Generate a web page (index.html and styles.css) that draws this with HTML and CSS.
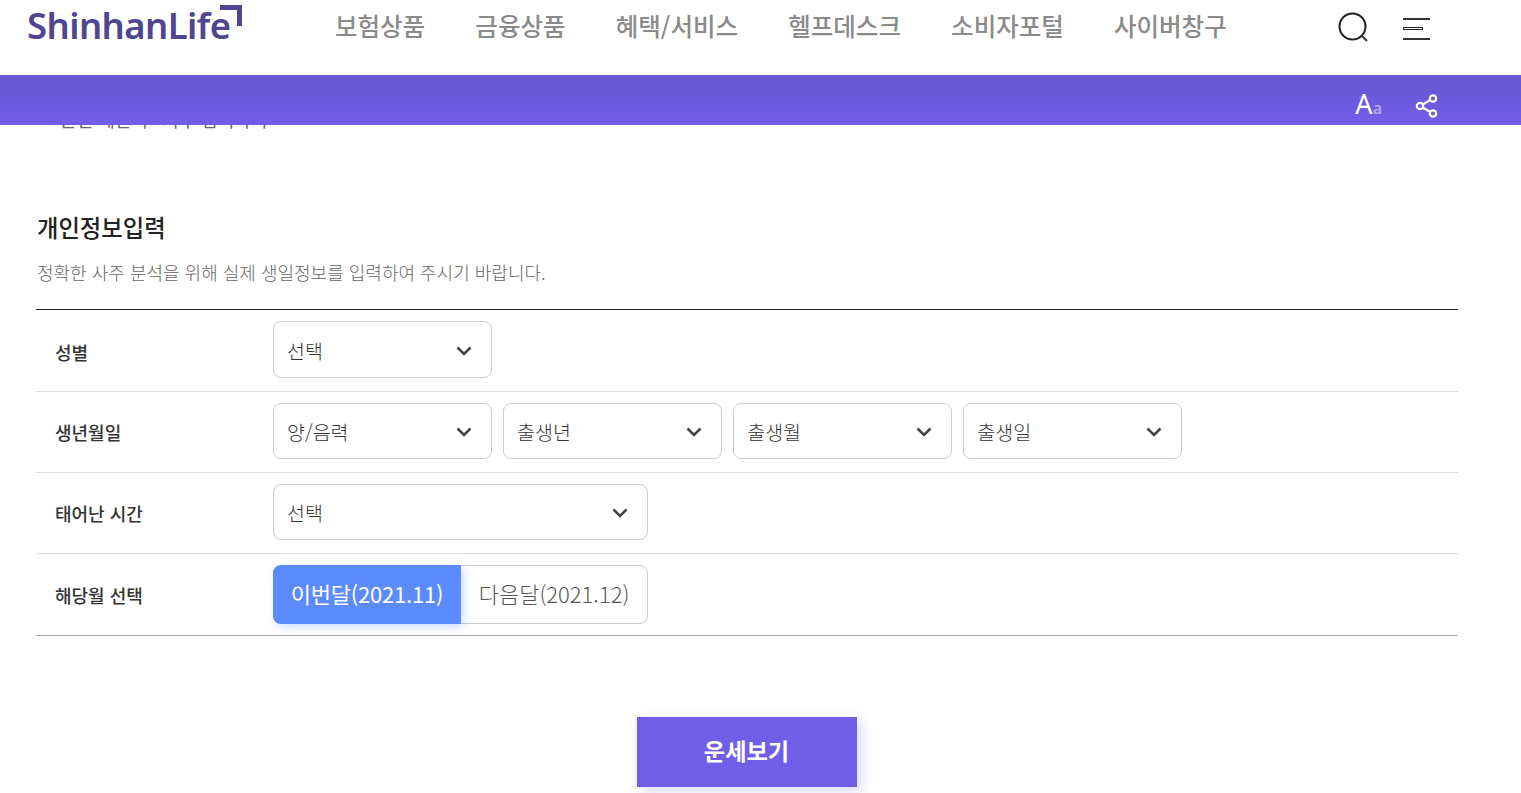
FILE: index.html
```html
<!DOCTYPE html>
<html lang="ko">
<head>
<meta charset="utf-8">
<title>개인정보입력</title>
<link rel="stylesheet" href="styles.css">
</head>
<body>
<header class="site-header">
  <div class="logo"><span class="logo-text">ShinhanLife</span><span class="logo-mark"></span></div>
  <nav class="gnb">
    <a>보험상품</a><a>금융상품</a><a>혜택/서비스</a><a>헬프데스크</a><a>소비자포털</a><a>사이버창구</a>
  </nav>
  <div class="tools">
    <svg class="ico-search" width="34" height="34" viewBox="0 0 34 34"><circle cx="15.5" cy="14.5" r="13" fill="none" stroke="#222" stroke-width="2"/><path d="M25 24l5 5" stroke="#444" stroke-width="2.4" fill="none"/></svg>
    <svg class="ico-menu" width="28" height="24" viewBox="0 0 28 24"><path d="M0 2h27M0 22h27" stroke="#333" stroke-width="2"/><rect x=".5" y="10.5" width="19" height="2" fill="#fff" stroke="#222"/></svg>
  </div>
</header>
<div class="subbar">
  <span class="font-size">A<small>a</small></span>
  <svg class="ico-share" width="24" height="26" viewBox="0 0 24 26"><g fill="none" stroke="#fff" stroke-width="2.2"><circle cx="18" cy="5.5" r="3.2"/><circle cx="5" cy="13" r="3.2"/><circle cx="18" cy="20.5" r="3.2"/><path d="M8 11.3l7-4M8 14.7l7 4"/></g></svg>
</div>
<main class="content">
  <p class="clipped">본인 계산서 · 자주 입력하기</p>
  <h2 class="title">개인정보입력</h2>
  <p class="desc">정확한 사주 분석을 위해 실제 생일정보를 입력하여 주시기 바랍니다.</p>
  <div class="form">
    <div class="row row-1">
      <div class="label">성별</div>
      <div class="fields"><div class="select select-tall">선택<svg class="chev" width="16" height="10" viewBox="0 0 16 10"><path d="M1.5 1.5L8 8l6.5-6.5"/></svg></div></div>
    </div>
    <div class="row">
      <div class="label">생년월일</div>
      <div class="fields">
        <div class="select">양/음력<svg class="chev" width="16" height="10" viewBox="0 0 16 10"><path d="M1.5 1.5L8 8l6.5-6.5"/></svg></div>
        <div class="select">출생년<svg class="chev" width="16" height="10" viewBox="0 0 16 10"><path d="M1.5 1.5L8 8l6.5-6.5"/></svg></div>
        <div class="select">출생월<svg class="chev" width="16" height="10" viewBox="0 0 16 10"><path d="M1.5 1.5L8 8l6.5-6.5"/></svg></div>
        <div class="select">출생일<svg class="chev" width="16" height="10" viewBox="0 0 16 10"><path d="M1.5 1.5L8 8l6.5-6.5"/></svg></div>
      </div>
    </div>
    <div class="row">
      <div class="label">태어난 시간</div>
      <div class="fields"><div class="select select-wide">선택<svg class="chev" width="16" height="10" viewBox="0 0 16 10"><path d="M1.5 1.5L8 8l6.5-6.5"/></svg></div></div>
    </div>
    <div class="row row-last">
      <div class="label">해당월 선택</div>
      <div class="fields">
        <div class="toggle"><span class="opt on">이번달(2021.11)</span><span class="opt">다음달(2021.12)</span></div>
      </div>
    </div>
  </div>
  <div class="actions"><button class="submit">운세보기</button></div>
</main>
</body>
</html>
```
FILE: styles.css
```css
* { box-sizing: border-box; }
html, body { margin: 0; padding: 0; height: 793px; overflow: hidden; background: #fff; }
body { font-family: "Noto Sans CJK KR", "Noto Sans", sans-serif; color: #222; }

.site-header { height: 75px; display: flex; align-items: flex-start; background: #fff; position: relative; z-index: 2; }
.logo { width: 335px; padding: 0 0 0 27px; height: 75px; position: relative; flex: none; }
.logo-text { display: block; font-family: "Noto Sans", sans-serif; font-weight: 600; font-size: 36.5px; line-height: 50px; color: #50468f; letter-spacing: -.6px; }
.logo-mark { position: absolute; left: 220px; top: 5px; width: 22px; height: 21px; border-top: 5px solid #50468f; border-right: 5px solid #50468f; }
.gnb { display: flex; gap: 50.2px; padding-top: 9px; flex: none; width: 1002px; }
.gnb a { font-size: 24.5px; line-height: 33px; font-weight: 500; color: #8a8a8a; letter-spacing: 0; white-space: nowrap; }
.tools { display: flex; gap: 32px; padding-top: 12px; align-items: flex-start; }
.ico-menu { margin-top: 5px; }

.subbar { height: 50px; background: linear-gradient(#6556cf, #735de9); display: flex; justify-content: flex-end; align-items: center; padding: 11px 82px 0 0; gap: 33px; position: relative; z-index: 2; }
.font-size { font-family: "Noto Sans", sans-serif; font-size: 27px; line-height: 36px; color: #fff; }
.font-size small { font-size: 16px; color: #b3a8f2; font-weight: 600; margin-left: 0; }

.content { padding: 0 63px 0 36px; margin-top: -12px; position: relative; z-index: 1; }
.clipped { margin: 0; height: 20px; padding-left: 24px; font-size: 18px; line-height: 12px; color: #666; }
.title { margin: 78px 0 0 1px; font-size: 23.3px; line-height: 32px; font-weight: 500; color: #222; }
.desc { margin: 16px 0 0 1px; font-size: 18px; line-height: 26px; color: #666; font-weight: 300; }
.form { margin-top: 24px; border-top: 1px solid #222; border-bottom: 1px solid #aaa; }
.row { display: flex; align-items: flex-start; height: 81px; border-top: 1px solid #ddd; }
.row-1 { border-top: 0; height: 81px; }
.row-last { height: 82px; }
.label { width: 237px; padding-left: 19px; flex: none; align-self: center; font-size: 18px; font-weight: 500; letter-spacing: 0; color: #333; line-height: 26px; }
.row-1 .label { padding-top: 2px; }
.fields { display: flex; gap: 11.6px; padding-top: 11px; }
.select { width: 218.5px; height: 56px; border: 1px solid #ccc; border-radius: 8px; padding: 1px 19px 0 13px; display: flex; align-items: center; justify-content: space-between; font-size: 19.5px; font-weight: 300; color: #333; background: #fff; }
.select-tall { height: 57px; padding-top: 2px; }
.select-wide { width: 375px; }
.chev { fill: none; stroke: #444; stroke-width: 2.6; }
.toggle { display: flex; width: 375px; height: 59px; border: 1px solid #ccc; border-radius: 8px; background: #fff; }
.opt { flex: 1; display: flex; align-items: center; justify-content: center; padding-bottom: 3px; font-size: 22px; font-weight: 300; color: #555; letter-spacing: 0; white-space: nowrap; }
.opt.on { flex: none; width: 188px; margin: -1px 0 -1px -1px; background: #5b8bff; color: #fff; border-radius: 8px 0 0 8px; box-shadow: 3px 3px 10px rgba(91,139,255,.3); font-weight: 400; letter-spacing: -.2px; }
.actions { display: flex; justify-content: center; margin: 81px 0 0 -1px; }
.submit { width: 220px; height: 70px; padding: 0 0 2px; border: 0; background: #705ee9; color: #fff; font: 700 23.2px/1 "Noto Sans CJK KR", sans-serif; box-shadow: 4px 4px 12px rgba(112,94,233,.25); }
```
